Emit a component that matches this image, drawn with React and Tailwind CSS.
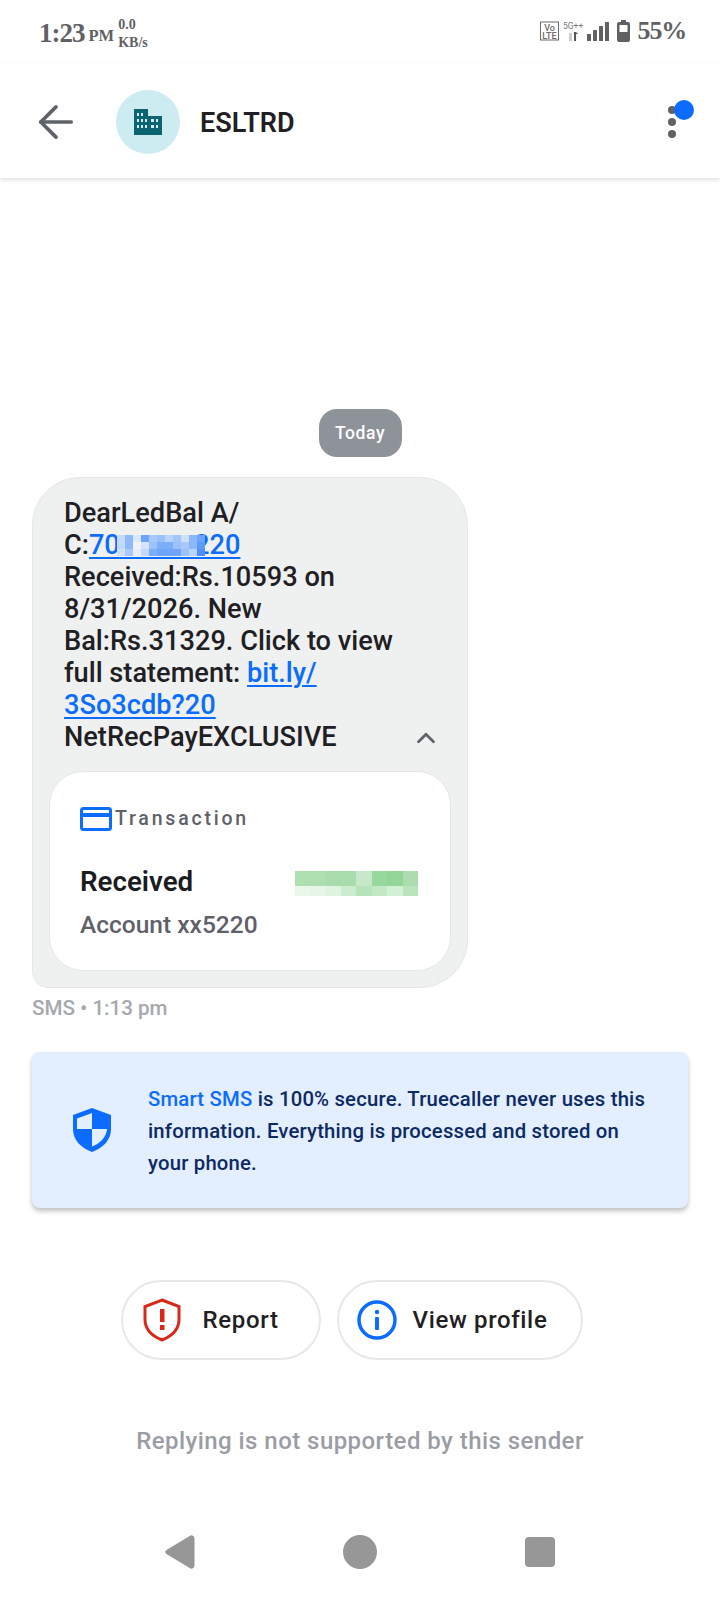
import { ArrowLeft, ChevronUp } from "lucide-react";

const roboto = "font-['Roboto',sans-serif]";
const serif = "font-['Liberation_Serif',serif]";

// pixelated patches hiding the account digits and the amount
const numberPixels = [
  ["bg-[#c6dafc]", "bg-[#8fb9fa]", "bg-[#dbe7fc]", "bg-[#6ea4f9]", "bg-[#a9c9fb]", "bg-[#9cc1fb]", "bg-[#b8d3fc]", "bg-[#a3c5fb]", "bg-[#cfe0fd]", "bg-[#8cb7fa]", "bg-[#6ea4f9]"],
  ["bg-[#c2d8fc]", "bg-[#8fb9fa]", "bg-[#f0f3f5]", "bg-[#d5e4fd]", "bg-[#9cc1fb]", "bg-[#7aaef9]", "bg-[#7aaef9]", "bg-[#9cc1fb]", "bg-[#a9c9fb]", "bg-[#8cb7fa]", "bg-[#5e9af8]"],
  ["bg-[#cfe0fd]", "bg-[#a9c9fb]", "bg-[#e7eef8]", "bg-[#c2d8fc]", "bg-[#7aaef9]", "bg-[#6ea4f9]", "bg-[#6ea4f9]", "bg-[#6ea4f9]", "bg-[#9cc1fb]", "bg-[#b8d3fc]", "bg-[#4f90f8]"],
];

const amountPixels = [
  ["h-[15px] bg-[#addfb0]", "h-[15px] bg-[#addfb0]", "h-[15px] bg-[#a9dcad]", "h-[15px] bg-[#a9dcad]", "h-[15px] bg-[#c9e8ca]", "h-[15px] bg-[#98d89d]", "h-[15px] bg-[#93d698]", "h-[15px] bg-[#aedcb1]"],
  ["h-[10px] bg-[#eaf7ea]", "h-[10px] bg-[#e6f5e7]", "h-[10px] bg-[#dff3e0]", "h-[10px] bg-[#cdebcf]", "h-[10px] bg-[#b6e3b9]", "h-[10px] bg-[#c2e8c4]", "h-[10px] bg-[#d3efd5]", "h-[10px] bg-[#b9e4bb]"],
];

function Pixels({ rows, cell }) {
  return (
    <div className="flex flex-col">
      {rows.map((row, i) => (
        <div key={i} className="flex">
          {row.map((c, j) => (
            <div key={j} className={`${cell} ${c}`} />
          ))}
        </div>
      ))}
    </div>
  );
}

function StatusBar() {
  return (
    <div className="flex h-[64px] items-start justify-between pl-[39px] pr-[34px] pt-[20px] text-[#5f6164]">
      <div className={`flex items-start ${serif} font-bold`}>
        <span className="text-[27px] leading-[26px] tracking-[-1px]">1:23</span>
        <span className="ml-[4px] mt-[6px] text-[16.5px] leading-[20px]">PM</span>
        <span className="ml-[4px] -mt-[4px] text-[14px] leading-[18px]">
          0.0
          <br />
          KB/s
        </span>
      </div>
      <div className="-mt-[2px] flex items-center gap-[4px]">
        <svg width="19" height="20" viewBox="0 0 19 20">
          <rect x="0.5" y="1" width="18" height="18" fill="none" stroke="#6b6b6b" strokeWidth="1" />
          <text x="9.5" y="9.500" fontSize="9" fontFamily="Roboto" fontWeight="500" textAnchor="middle" fill="#6b6b6b">Vo</text>
          <text x="9.5" y="17.500" fontSize="9" fontFamily="Roboto" fontWeight="500" textAnchor="middle" fill="#6b6b6b">LTE</text>
        </svg>
        <svg width="20" height="20" viewBox="0 0 20 20">
          <text x="0" y="8" fontSize="8.500" fontFamily="Roboto" fill="#777">5G++</text>
          <rect x="6" y="12" width="3" height="8" fill="#ccc" />
          <path d="M11 11h2v9h-2zM13 13h2l-2-2z" fill="#555" />
        </svg>
        <svg width="22" height="20" viewBox="0 0 22 20" fill="#616161">
          <rect x="0" y="13" width="4" height="7" rx="0.5" />
          <rect x="6" y="9" width="4" height="11" rx="0.5" />
          <rect x="12" y="5" width="4" height="15" rx="0.5" />
          <rect x="18" y="1" width="4" height="19" rx="0.5" />
        </svg>
        <svg width="13" height="22" viewBox="0 0 13 22" className="ml-[4px]">
          <path d="M4 0h5v2h2a2 2 0 012 2v16a2 2 0 01-2 2H2a2 2 0 01-2-2V4a2 2 0 012-2h2z" fill="#616161" />
          <rect x="2.5" y="5" width="8" height="7" fill="#fff" />
        </svg>
        <span className={`ml-[4px] ${serif} font-bold text-[26px] leading-[26px] tracking-[-1.2px]`}>55%</span>
      </div>
    </div>
  );
}

function Header() {
  return (
    <div className="relative z-10 flex h-[114px] items-center bg-white pl-[30px] pr-[44px] pt-[2px] shadow-[0_2px_4px_rgba(0,0,0,0.12)]">
      <ArrowLeft className="h-[52px] w-[52px] text-[#5f6368]" strokeWidth={1.7} />
      <div className="ml-[34px] flex h-[64px] w-[64px] items-center justify-center rounded-full bg-[#cdecf2]">
        <svg width="28" height="26" viewBox="0 0 28 26" fill="#0b6470">
          <path fillRule="evenodd" d="M0 0h14v7h14v19H0zM3 4v3h2V4zm4 0v3h2V4zM3 10v3h2v-3zm4 0v3h2v-3zm4 0v3h2v-3zM3 16v3h2v-3zm4 0v3h2v-3zm4 0v3h2v-3zm6-6v3h3v-3zm5 0v3h2v-3zm-5 6v3h3v-3zm5 0v3h2v-3z" />
        </svg>
      </div>
      <span className="ml-[20px] mt-[3px] text-[27px] font-semibold text-[#1f2023]">ESLTRD</span>
      <div className="relative ml-auto flex w-[8px] flex-col gap-[4px]">
        <div className="h-[8px] w-[8px] rounded-full bg-[#5f6368]" />
        <div className="h-[8px] w-[8px] rounded-full bg-[#5f6368]" />
        <div className="h-[8px] w-[8px] rounded-full bg-[#5f6368]" />
        <div className="absolute -top-[6px] left-[6px] h-[20px] w-[20px] rounded-full bg-[#0b6cff]" />
      </div>
    </div>
  );
}

function MessageBubble() {
  const link = "text-[#0b6cff] underline underline-offset-[3px] decoration-[1.5px]";
  return (
    <div className="ml-[32px] w-[436px] rounded-[48px] rounded-bl-[16px] border border-[#e5e7e7] bg-[#eff1f1] pb-[16px]">
      <div className="relative pl-[31px] pr-[30px] pt-[19px] text-[27.2px] font-medium leading-[32px] text-[#1f2023]">
        <div>DearLedBal A/</div>
        <div>
          C:
          <span className={link}>
            70
            <span className="relative tracking-[-0.6px] text-transparent">
              00000
              <span className="absolute -left-[3px] top-[6px] block">
                <Pixels rows={numberPixels} cell="h-[7px] w-[8px]" />
              </span>
            </span>
            220
          </span>
        </div>
        <div>Received:Rs.10593 on</div>
        <div>8/31/2026. New</div>
        <div>Bal:Rs.31329. Click to view</div>
        <div>
          full statement: <span className={link}>bit.ly/</span>
        </div>
        <div>
          <span className={link}>3So3cdb?20</span>
        </div>
        <div>NetRecPayEXCLUSIVE</div>
        <ChevronUp className="absolute bottom-[0px] right-[26px] h-[30px] w-[30px] text-[#5f6368]" strokeWidth={2.2} />
      </div>

      <div className="mx-[16px] mt-[18px] h-[200px] rounded-[34px] border border-[#e5e7e7] bg-white px-[30px] pt-[32px]">
        <div className="flex items-center">
          <svg width="32" height="24" viewBox="0 0 32 24">
            <rect x="1.5" y="1.5" width="29" height="21" rx="2" fill="none" stroke="#0b6cff" strokeWidth="3" />
            <rect x="2" y="6" width="28" height="4" fill="#0b6cff" />
          </svg>
          <span className="ml-[3px] text-[19.500px] font-medium tracking-[2.8px] text-[#5f6169]">Transaction</span>
        </div>
        <div className="mt-[31px] flex items-start justify-between">
          <span className="text-[27.7px] font-semibold leading-[36px] text-[#1b1c1f]">Received</span>
          <div className="mr-[2px] mt-[7px]">
            <Pixels rows={amountPixels} cell="w-[15.4px]" />
          </div>
        </div>
        <div className="mt-[9px] text-[24.5px] font-medium leading-[32px] text-[#5f6169]">Account xx5220</div>
      </div>
    </div>
  );
}

function SecureNote() {
  return (
    <div className="mx-[32px] mt-[32px] flex h-[156px] items-center rounded-[8px] bg-[#e3eefe] pl-[41px] pr-[30px] shadow-[0_3px_5px_rgba(0,0,0,0.25)]">
      <svg width="38" height="44" viewBox="0 0 38 44" className="shrink-0">
        <path d="M19 0L38 7v14c0 11-8 19-19 23C8 40 0 32 0 21V7z" fill="#0b6cff" />
        <path d="M19 5L4 10.5V21h15zM19 21v17.5c8-3 14.500-9.500 15-17.500z" fill="#e3eefe" />
      </svg>
      <p className="ml-[37px] pt-[2px] text-[20.3px] font-medium leading-[32px] tracking-[0.2px] text-[#0c2a63]">
        <span className="text-[#0b6cff]">Smart SMS</span> is 100% secure. Truecaller never uses this information. Everything is processed and stored on your phone.
      </p>
    </div>
  );
}

function Actions() {
  const pill = "flex h-[80px] items-center rounded-full border-2 border-[#e6e7e8] bg-white text-[24px] font-medium tracking-[0.65px] text-[#1f2023]";
  return (
    <div className="mt-[72px] flex justify-center gap-[16px] pr-[17px]">
      <div className={`${pill} w-[200px] pl-[20px]`}>
        <svg width="38" height="44" viewBox="0 0 38 44">
          <path d="M19 2L36 8.500v13c0 9.500-7 16.500-17 20.500C9 38 2 31 2 21.500v-13z" fill="none" stroke="#d9281a" strokeWidth="3" />
          <rect x="17" y="11" width="4.500" height="13" fill="#d9281a" />
          <rect x="17" y="27" width="4.500" height="5" fill="#d9281a" />
        </svg>
        <span className="ml-[22px]">Report</span>
      </div>
      <div className={`${pill} w-[246px] pl-[18px]`}>
        <svg width="40" height="40" viewBox="0 0 40 40">
          <circle cx="20" cy="20" r="18" fill="none" stroke="#0b6cff" strokeWidth="3.500" />
          <circle cx="20" cy="12" r="2.200" fill="#0b6cff" />
          <rect x="18" y="17" width="4" height="13" rx="1" fill="#0b6cff" />
        </svg>
        <span className="ml-[16px]">View profile</span>
      </div>
    </div>
  );
}

function NavBar() {
  return (
    <div className="mt-[78px] flex items-center pl-[165px]">
      <svg width="30" height="34" viewBox="0 0 30 34" fill="#979797">
        <path d="M25 .7a3 3 0 014.500 2.500v27.600a3 3 0 01-4.500 2.500L1.500 19a2.300 2.300 0 010-4z" />
      </svg>
      <div className="ml-[148px] h-[34px] w-[34px] rounded-full bg-[#979797]" />
      <div className="ml-[148px] h-[30px] w-[30px] rounded-[4px] bg-[#979797]" />
    </div>
  );
}

export default function App() {
  return (
    <div className={`h-[1600px] w-[720px] overflow-hidden bg-white ${roboto}`}>
      <StatusBar />
      <Header />

      <div className="mt-[231px] flex justify-center">
        <div className="flex h-[48px] w-[83px] items-center justify-center rounded-[18px] bg-[#8e9299] text-[17.5px] font-medium tracking-[0.6px] text-white">
          Today
        </div>
      </div>

      <div className="mt-[20px]">
        <MessageBubble />
      </div>
      <div className="ml-[32px] mt-[8px] text-[20.6px] font-medium leading-[24px] text-[#a5a8ad]">SMS • 1:13 pm</div>

      <SecureNote />
      <Actions />

      <div className="mt-[65px] text-center text-[24px] font-medium leading-[32px] tracking-[0.45px] text-[#9a9da3]">
        Replying is not supported by this sender
      </div>

      <NavBar />
    </div>
  );
}
